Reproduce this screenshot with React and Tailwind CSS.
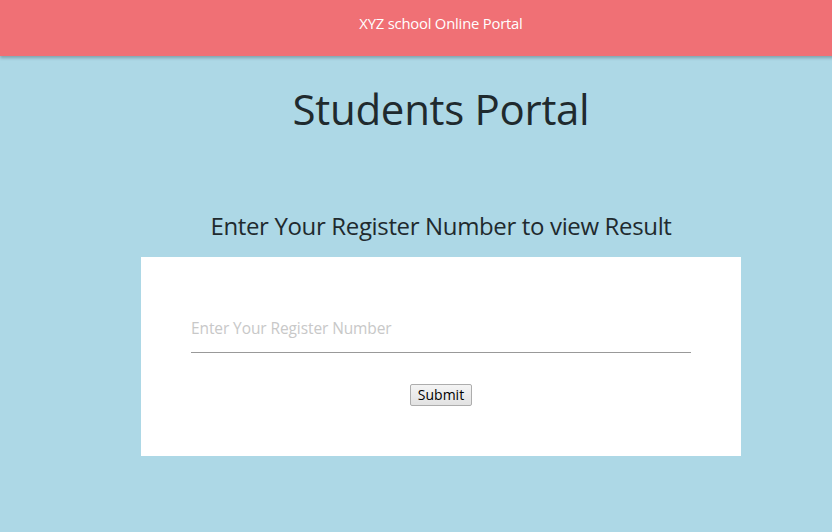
export default function App() {
  return (
    <div className="min-h-[532px] bg-[#add8e6] overflow-hidden font-['Open_Sans',sans-serif] text-[#1f2a2e]">
      <div className="w-[882px]">
        <header className="h-[56px] bg-[#f07075] shadow-[0_2px_3px_rgba(0,0,0,0.25)] flex justify-center pt-[12px]">
          <span className="text-[14.8px] text-white tracking-[-0.2px]">XYZ school Online Portal</span>
        </header>
        <h1 className="text-center text-[42px] leading-none mt-[32px] tracking-[-0.3px]">
          Students Portal
        </h1>
        <h2 className="text-center text-[24px] leading-none mt-[84px] tracking-[-0.35px]">
          Enter Your Register Number to view Result
        </h2>
        <form
          onSubmit={(e) => e.preventDefault()}
          className="mx-auto mt-[19px] w-[600px] h-[199px] bg-white flex flex-col items-center pt-[60px]"
        >
          <input
            placeholder="Enter Your Register Number"
            className="w-[500px] border-b border-[#999] pb-[12px] text-[15.5px] outline-none placeholder:text-[#c8c8c8] tracking-[-0.1px]"
          />
          <button
            type="submit"
            className="mt-[31px] h-[22px] px-[7px] text-[14px] leading-none border border-[#adadad] rounded-[2px] bg-gradient-to-b from-[#f4f4f4] to-[#e2e2e2] text-black"
          >
            Submit
          </button>
        </form>
      </div>
    </div>
  );
}
